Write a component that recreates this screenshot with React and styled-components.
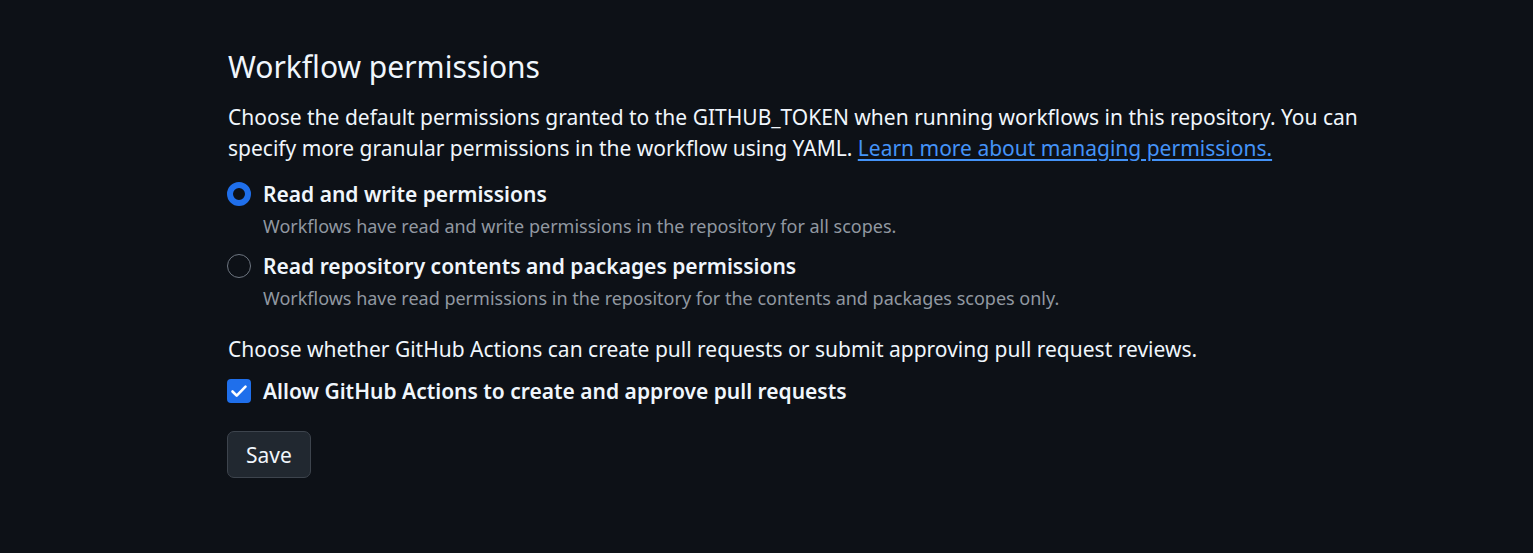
import React from 'react';
import styled, { createGlobalStyle } from 'styled-components';

const GlobalStyle = createGlobalStyle`
  html, body {
    margin: 0;
    padding: 0;
    background: #0d1117;
  }
  body {
    font-family: 'Noto Sans', 'Open Sans', sans-serif;
    color: #f0f6fc;
    -webkit-font-smoothing: antialiased;
  }
`;

const Page = styled.div`
  min-height: 553px;
  padding: 44px 0 0 227px;
  box-sizing: border-box;
`;

const Section = styled.div`
  width: 1160px;
`;

const Title = styled.h2`
  margin: 0 0 13px 1px;
  font-size: 30px;
  font-weight: 400;
  line-height: 45px;
  color: #f0f6fc;
`;

const Text = styled.p`
  margin: ${p => p.$mt || 0}px 0 ${p => p.$mb || 0}px 1px;
  font-size: 21px;
  line-height: 31px;
  color: #f0f6fc;
`;

const Link = styled.a`
  color: #4493f8;
  text-decoration: underline;
  text-underline-offset: 3px;
`;

const Options = styled.div`
  display: flex;
  flex-direction: column;
  gap: 10px;
  margin-top: 15px;
`;

const Option = styled.label`
  display: grid;
  grid-template-columns: 24px 1fr;
  column-gap: 12px;
  align-items: center;
`;

const Radio = styled.span`
  width: 24px;
  height: 24px;
  box-sizing: border-box;
  border-radius: 50%;
  border: ${p => (p.$checked ? '6px solid #1f6feb' : '1px solid #6e7681')};
  background: #0d1117;
`;

const Label = styled.span`
  font-size: 21px;
  font-weight: 600;
  line-height: 30px;
  color: #f0f6fc;
`;

const Hint = styled.span`
  grid-column: 2;
  font-size: 18px;
  line-height: 30px;
  color: #9198a1;
  margin-top: 2px;
`;

const Check = styled.span`
  width: 24px;
  height: 24px;
  border-radius: 4px;
  background: #1f6feb;
  display: flex;
  align-items: center;
  justify-content: center;
`;

const Button = styled.button`
  margin-top: 25px;
  height: 47px;
  padding: 0 18px;
  border-radius: 7px;
  border: 1px solid #3d444d;
  background: #212830;
  color: #f0f6fc;
  font-family: inherit;
  font-size: 21px;
  font-weight: 400;
`;

const App = () => (
  <Page>
    <GlobalStyle />
    <Section>
      <Title>Workflow permissions</Title>
      <Text>
        Choose the default permissions granted to the GITHUB_TOKEN when running workflows in this repository. You can
        specify more granular permissions in the workflow using YAML.{' '}
        <Link href="#">Learn more about managing permissions.</Link>
      </Text>
      <Options>
        <Option>
          <Radio $checked />
          <Label>Read and write permissions</Label>
          <Hint>Workflows have read and write permissions in the repository for all scopes.</Hint>
        </Option>
        <Option>
          <Radio />
          <Label>Read repository contents and packages permissions</Label>
          <Hint>Workflows have read permissions in the repository for the contents and packages scopes only.</Hint>
        </Option>
      </Options>
      <Text $mt={21} $mb={11}>
        Choose whether GitHub Actions can create pull requests or submit approving pull request reviews.
      </Text>
      <Option>
        <Check>
          <svg width="20" height="20" viewBox="0 0 20 20" fill="none">
            <path d="M3.5 10.5l4.2 4.2 8.8-9" stroke="#fff" strokeWidth="2.6" strokeLinecap="round" strokeLinejoin="round" />
          </svg>
        </Check>
        <Label>Allow GitHub Actions to create and approve pull requests</Label>
      </Option>
      <Button>Save</Button>
    </Section>
  </Page>
);

export default App;
